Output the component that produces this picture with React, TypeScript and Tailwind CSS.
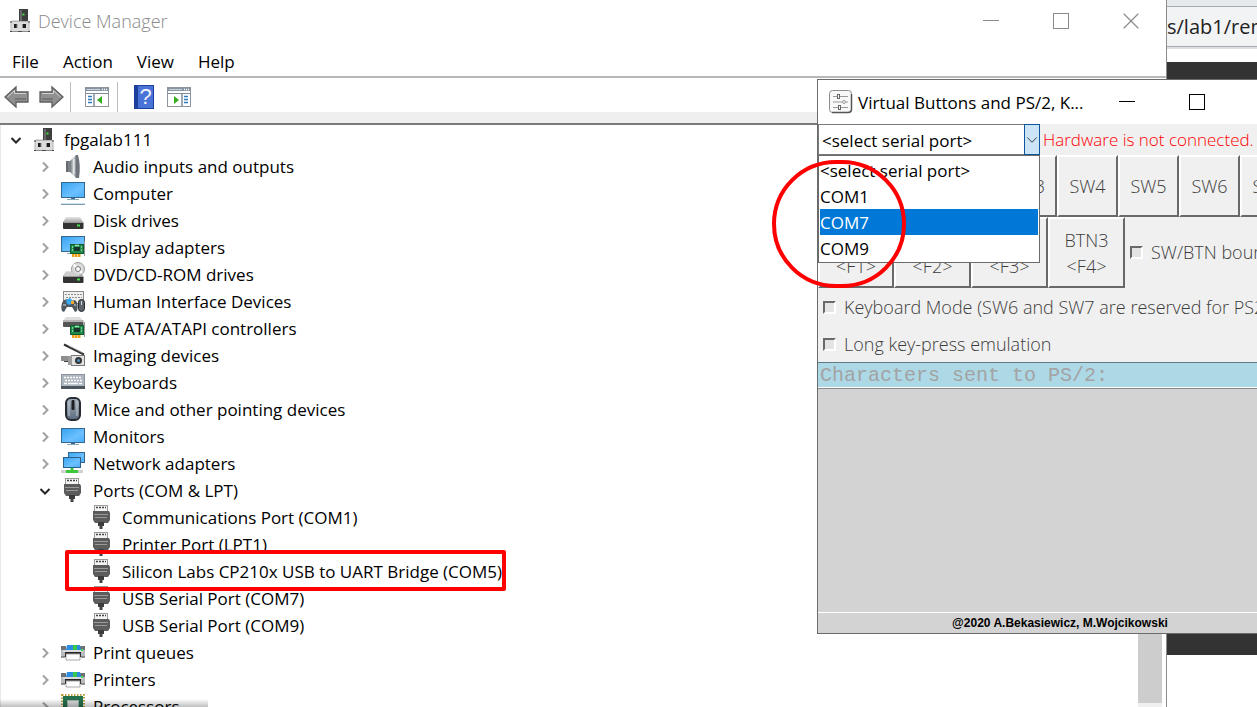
import type { ReactNode } from "react";
import { X, ChevronDown } from "lucide-react";

const Computer = () => (
  <svg viewBox="0 0 20 24" className="h-6 w-5">
    <rect x="9" y="0" width="9" height="12" fill="#3f3f3f" />
    <rect x="10" y="1" width="2" height="11" fill="#6a6a6a" />
    <rect x="12.5" y="4.5" width="2" height="2" fill="#3fe04a" />
    <path d="M2 11h7v1h9v1H1z" fill="#dcdcdc" />
    <rect x="1" y="12.5" width="18" height="10" fill="#dcdcdc" stroke="#b4b4b4" />
    <path d="M1 22.5h18" stroke="#8c8c8c" />
    <rect x="4" y="15" width="3" height="4" fill="#1c1c1c" />
    <rect x="13" y="15" width="3" height="4" fill="#1c1c1c" />
    <path d="M7 15v4M12.500 15v4" stroke="#8a8a8a" />
    <path d="M8 22.5h4M0 22.5h2M18 22.5h2M0 13h2M18 13h2" stroke="#4a4a4a" />
  </svg>
);

function Glyph({ children }: { children: ReactNode }) {
  return (
    <svg viewBox="0 0 24 25" className="h-[25px] w-6">
      <defs>
        <linearGradient id="screen" x1="0" y1="0" x2="1" y2="1">
          <stop offset="0" stopColor="#35a2f0" />
          <stop offset="0.6" stopColor="#6cc0ff" />
          <stop offset="1" stopColor="#48adf9" />
        </linearGradient>
        <linearGradient id="cone" x1="0" y1="0" x2="1" y2="0">
          <stop offset="0" stopColor="#6b7177" />
          <stop offset="0.6" stopColor="#d4d8dc" />
          <stop offset="1" stopColor="#7d848b" />
        </linearGradient>
        <linearGradient id="mouse" x1="0" y1="0" x2="0" y2="1">
          <stop offset="0" stopColor="#a5b1bd" />
          <stop offset="1" stopColor="#5b6b7c" />
        </linearGradient>
        <linearGradient id="case" x1="0" y1="0" x2="0" y2="1">
          <stop offset="0" stopColor="#e6e6e6" />
          <stop offset="1" stopColor="#a8a8a8" />
        </linearGradient>
      </defs>
      {children}
    </svg>
  );
}

const Card = () => (
  <g>
    <rect x="9.5" y="9.5" width="13" height="9" fill="#1f8a4a" stroke="#0f5c2e" />
    <rect x="13" y="12" width="6" height="4" fill="#17352a" />
    <path d="M11 12h1M11 15h1M20 12h1M20 15h1M14 10.500h4" stroke="#9be8b2" strokeWidth="1.5" />
    <path d="M23.500 6v15" stroke="#9a9a9a" />
    <path d="M11 20.5h9" stroke="#f0a01a" strokeWidth="3" strokeDasharray="2.500 0.500" />
  </g>
);

const Drive = () => (
  <g>
    <path d="M5 9h14l3 5H2z" fill="url(#case)" />
    <rect x="2" y="14" width="20.500" height="7" rx="1" fill="#333" />
    <path d="M2.500 14.500h19.500" stroke="#9b9b9b" />
    <rect x="16" y="16.500" width="3" height="2" fill="#46e04a" />
  </g>
);

const Audio = () => (
  <Glyph>
    <path d="M5 7h4v11H5z" fill="#7c8288" />
    <path d="M9 7l6-6v23l-6-6z" fill="url(#cone)" />
    <path d="M15 1h2q3 11 1 23h-3z" fill="#6d747b" />
    <path d="M6 7v11" stroke="#4e5459" />
    <path d="M13 5v15" stroke="#eef1f3" />
  </Glyph>
);

const Pc = () => (
  <Glyph>
    <rect x="0.5" y="1.5" width="23" height="15" fill="url(#screen)" stroke="#35688e" />
    <path d="M6 18.5h12" stroke="#8aa6b8" />
    <rect x="10" y="17" width="4" height="1" fill="#35688e" />
    <path d="M0 22.500h24" stroke="#cfe0ea" />
    <path d="M0 23.5h24" stroke="#7f9db0" />
  </Glyph>
);

const Disk = () => (
  <Glyph>
    <Drive />
  </Glyph>
);

const Display = () => (
  <Glyph>
    <rect x="0.5" y="1.5" width="23" height="15" fill="url(#screen)" stroke="#35688e" />
    <path d="M6 18.5h4" stroke="#8aa6b8" />
    <Card />
  </Glyph>
);

const Dvd = () => (
  <Glyph>
    <Drive />
    <circle cx="17" cy="7" r="6.500" fill="#dcdcdc" stroke="#9b9b9b" />
    <path d="M17 7L12.500 2.5M17 7l4 4" stroke="#fff" strokeWidth="2" />
    <circle cx="17" cy="7" r="2.5" fill="#fff" stroke="#777" />
    <path d="M4 12l2-2h6l7 4H2z" fill="#cfcfcf" />
  </Glyph>
);

const Hid = () => (
  <Glyph>
    <rect x="2.500" y="2.5" width="20" height="12" fill="#f0f0f0" stroke="#8a8a8a" />
    <path d="M4 5.5h17M5 8.5h16" stroke="#8e8e8e" strokeDasharray="2 1" />
    <path d="M1 22q-2-7 2-11l4-1 3 2 4-1q4 3 2 11l-2 1-3-5H6l-3 5z" fill="#505860" />
    <path d="M2 16h3M13 16h2" stroke="#a9b6c2" strokeWidth="1.500" />
    <path d="M5 11l4-2 3 3-3 4-3-1z" fill="#35a9f4" />
    <rect x="10" y="12" width="3" height="3" fill="#f5a623" />
    <rect x="17.500" y="10.5" width="6" height="12" rx="3" fill="#5d646c" stroke="#25282c" />
    <path d="M20.500 12v4" stroke="#d2d8de" />
  </Glyph>
);

const Ide = () => (
  <Glyph>
    <path d="M5 1h14l3 4H2z" fill="#dedede" />
    <rect x="2" y="4" width="20.500" height="3" fill="#b5b5b5" />
    <rect x="2" y="6" width="20.500" height="5" rx="1" fill="#555" />
    <Card />
  </Glyph>
);

const Imaging = () => (
  <Glyph>
    <path d="M3 1.500l20 10" stroke="#2d2d2d" strokeWidth="2" />
    <path d="M8 3l14 7" stroke="#a5a5a5" strokeWidth="0.7" />
    <rect x="0" y="13" width="7" height="5" fill="#8e8e8e" />
    <path d="M7 15h3M3 18.500h6" stroke="#444" />
    <rect x="10.500" y="12.500" width="13" height="10" fill="#e2e2e2" stroke="#777" />
    <rect x="7" y="13" width="4" height="9" fill="#9c9c9c" />
    <circle cx="17.500" cy="17.500" r="3.500" fill="#333" />
    <circle cx="17.500" cy="17.500" r="1.500" fill="#4d94c9" />
  </Glyph>
);

const Keyboard = () => (
  <Glyph>
    <rect x="0.500" y="4.500" width="23" height="12" fill="#aeb6bf" stroke="#8b949d" />
    <rect x="0" y="16" width="24" height="3" fill="#4d555e" />
    <path d="M3 7.500h18M4 10.500h17" stroke="#fff" strokeWidth="1.500" strokeDasharray="2 1" />
    <path d="M3 13.500h3M7 13.500h10M18 13.500h3" stroke="#fff" strokeWidth="1.500" />
  </Glyph>
);

const Mouse = () => (
  <Glyph>
    <rect x="5" y="1" width="14" height="22" rx="5" fill="url(#mouse)" stroke="#262b31" strokeWidth="2" />
    <path d="M8 4v15M16 4v15" stroke="#d0d8e0" strokeWidth="0.800" />
    <rect x="10.500" y="3" width="3" height="10" rx="1" fill="#1d2126" />
  </Glyph>
);

const Monitor = () => (
  <Glyph>
    <rect x="0.5" y="4.500" width="23" height="14" fill="url(#screen)" stroke="#35688e" />
    <rect x="10" y="19" width="4" height="1" fill="#35688e" />
    <path d="M6 20.500h12" stroke="#8aa6b8" />
  </Glyph>
);

const Network = () => (
  <Glyph>
    <rect x="7.500" y="1.500" width="16" height="10" fill="url(#screen)" stroke="#35688e" />
    <rect x="2.500" y="6.500" width="17" height="10" fill="url(#screen)" stroke="#2b5f88" />
    <path d="M0 20.500h22" stroke="#d0d0d0" strokeWidth="3" />
    <path d="M5 20.500h12M11 17v5" stroke="#3cc63c" strokeWidth="3" />
  </Glyph>
);

const Port = () => (
  <Glyph>
    <rect x="4.500" y="0.500" width="13" height="6" fill="#f4f4f4" stroke="#9b9b9b" />
    <path d="M6 2.500h10" stroke="#444" strokeWidth="1.500" strokeDasharray="2 1" />
    <path d="M3 6h16l1 2v7l-2 3H5l-2-3V7z" fill="#5c5c5c" />
    <path d="M4 9.500h14M5 12.500h12" stroke="#9a9a9a" />
    <rect x="8" y="17" width="6" height="4" fill="#3b3b3b" />
    <rect x="9.500" y="20" width="3" height="4" fill="#444" />
  </Glyph>
);

const Printer = () => (
  <Glyph>
    <path d="M0 6h4v3h16V6h4v11H0z" fill="#b9bcbf" />
    <path d="M0 6h5v4H0zM19 6h5v4h-5z" fill="#6e7276" />
    <path d="M6 5h13l1 5H5z" fill="#2b8de0" />
    <path d="M12 5h4v5h-4z" fill="#36c94b" />
    <path d="M2 10h20v2H2z" fill="#d9dbdd" />
    <rect x="4" y="12" width="16" height="2" fill="#222" />
    <rect x="20" y="9" width="2" height="2" fill="#42e04c" />
    <path d="M5 14h14v6H5z" fill="#fdfdfd" stroke="#a9a9a9" />
    <path d="M4.500 13v4M19.500 13v4" stroke="#333" />
    <path d="M0 17h4M20 17h4" stroke="#777" strokeWidth="1.500" />
  </Glyph>
);

const Processor = () => (
  <Glyph>
    <rect x="1" y="1" width="22" height="22" fill="none" stroke="#c0a040" strokeWidth="2" strokeDasharray="1.500 1.500" />
    <rect x="2" y="2" width="20" height="20" fill="#23704d" />
    <rect x="6.500" y="6.500" width="11" height="11" fill="#d9dcdc" stroke="#9fb0a8" />
  </Glyph>
);

type Node = { label: string; icon: () => ReactNode; level: number; open?: boolean; marked?: boolean };

const nodes: Node[] = [
  { label: "fpgalab111", icon: Computer, level: 0, open: true },
  { label: "Audio inputs and outputs", icon: Audio, level: 1 },
  { label: "Computer", icon: Pc, level: 1 },
  { label: "Disk drives", icon: Disk, level: 1 },
  { label: "Display adapters", icon: Display, level: 1 },
  { label: "DVD/CD-ROM drives", icon: Dvd, level: 1 },
  { label: "Human Interface Devices", icon: Hid, level: 1 },
  { label: "IDE ATA/ATAPI controllers", icon: Ide, level: 1 },
  { label: "Imaging devices", icon: Imaging, level: 1 },
  { label: "Keyboards", icon: Keyboard, level: 1 },
  { label: "Mice and other pointing devices", icon: Mouse, level: 1 },
  { label: "Monitors", icon: Monitor, level: 1 },
  { label: "Network adapters", icon: Network, level: 1 },
  { label: "Ports (COM & LPT)", icon: Port, level: 1, open: true },
  { label: "Communications Port (COM1)", icon: Port, level: 2 },
  { label: "Printer Port (LPT1)", icon: Port, level: 2 },
  { label: "Silicon Labs CP210x USB to UART Bridge (COM5)", icon: Port, level: 2, marked: true },
  { label: "USB Serial Port (COM7)", icon: Port, level: 2 },
  { label: "USB Serial Port (COM9)", icon: Port, level: 2 },
  { label: "Print queues", icon: Printer, level: 1 },
  { label: "Printers", icon: Printer, level: 1 },
  { label: "Processors", icon: Processor, level: 1 },
];

const indent = ["pl-[3px]", "pl-8", "pl-[61px]"];

function TreeRow({ node }: { node: Node }) {
  const Icon = node.icon;
  return (
    <li className={`relative flex h-[27px] items-center ${indent[node.level]}`}>
      <span className="flex w-[26px] shrink-0 justify-center">
        {node.level < 2 && (
          <button aria-label={`Toggle ${node.label}`}>
            <svg viewBox="0 0 12 12" className="size-3" fill="none" strokeWidth="2">
              {node.open ? (
                <path d="M1.500 4l4.500 4.500L10.500 4" stroke="#262626" />
              ) : (
                <path d="M4 1.500L8.500 6 4 10.500" stroke="#a0a0a0" />
              )}
            </svg>
          </button>
        )}
      </span>
      <span className="ml-[3px] flex w-6 shrink-0 justify-center">
        <Icon />
      </span>
      <span className="ml-2 whitespace-nowrap">{node.label}</span>
      {node.marked && (
        <span className="absolute -top-2 left-[65px] z-10 h-[41px] w-[441px] rounded-xs border-4 border-[#ff0000]" />
      )}
    </li>
  );
}

function Arrow({ flip }: { flip?: boolean }) {
  return (
    <svg viewBox="0 0 26 24" className={flip ? "h-6 w-[26px] -scale-x-100" : "h-6 w-[26px]"}>
      <path d="M1 12L12 2V7h12v10H12v5z" fill="#909090" stroke="#5e5e5e" strokeWidth="1.300" />
      <path d="M3.500 12L10.500 5.500V8.500H22" fill="none" stroke="#d2d2d2" />
      <path d="M11 14h11" stroke="#757575" strokeWidth="2" />
    </svg>
  );
}

function Pane({ flip }: { flip?: boolean }) {
  return (
    <svg viewBox="0 0 24 20" className="h-5 w-6">
      <rect x="0.500" y="0.500" width="23" height="19" fill="#fff" stroke="#8d949b" />
      <rect x="1" y="1" width="22" height="3" fill="#8795a3" />
      <path d="M2 2.500h13" stroke="#c9d2da" />
      <path d="M17 2.500h5" stroke="#fff" strokeWidth="1.500" strokeDasharray="1 1" />
      <path d="M1 6.500h22" stroke="#7c8c9b" />
      <g transform={flip ? "translate(24 0) scale(-1 1)" : undefined}>
        <path d="M3 9.500h4M3 12.500h4M3 15.500h4" stroke="#2c7cc0" strokeWidth="1.500" />
        <path d="M9 7v12" stroke="#7c8c9b" strokeWidth="1.500" />
        <path d="M17 9v8l-5-4z" fill="#36ad1f" />
      </g>
    </svg>
  );
}

function WindowControls() {
  return (
    <div className="flex items-center">
      <button aria-label="Minimize" className="flex w-[70px] justify-center">
        <svg viewBox="0 0 16 16" className="size-4" fill="none" stroke="currentColor">
          <path d="M0 7.500h16" />
        </svg>
      </button>
      <button aria-label="Maximize" className="flex w-[70px] justify-center">
        <svg viewBox="0 0 16 16" className="size-4" fill="none" stroke="currentColor">
          <rect x="0.500" y="0.500" width="15" height="15" />
        </svg>
      </button>
      <button aria-label="Close" className="flex w-[70px] justify-center">
        <X size={28} strokeWidth={1} />
      </button>
    </div>
  );
}

function DeviceManager() {
  return (
    <section className="flex min-w-0 flex-1 flex-col overflow-hidden border-r border-[#8c8c8c] bg-white text-black">
      <header className="flex h-[41px] shrink-0 items-center justify-between pl-[10px] text-[#8a8a8a]">
        <div className="flex items-center gap-2">
          <Computer />
          <h1 className="pt-px text-[18px] font-light">Device Manager</h1>
        </div>
        <WindowControls />
      </header>
      <nav className="flex h-[37px] shrink-0 items-center gap-6 border-b-2 border-[#b8b8b8] pl-3 pt-[6px]">
        <button>File</button>
        <button>Action</button>
        <button>View</button>
        <button>Help</button>
      </nav>
      <div className="flex h-[34px] shrink-0 items-center pl-1 pt-1">
        <button aria-label="Back">
          <Arrow />
        </button>
        <button aria-label="Forward" className="ml-2">
          <Arrow flip />
        </button>
        <span className="ml-[6px] h-[30px] w-px bg-[#bdbdbd]" />
        <button aria-label="Show console tree" className="ml-[14px]">
          <Pane />
        </button>
        <span className="ml-2 h-[30px] w-px bg-[#bdbdbd]" />
        <button
          aria-label="Help topics"
          className="ml-4 flex h-6 w-5 items-center justify-center border border-l-4 border-[#1c3f9c] bg-[#4a73d8] font-['Liberation_Sans',sans-serif] text-[22px] leading-none text-[#eef2fb]"
        >
          ?
        </button>
        <button aria-label="Show action pane" className="ml-[13px]">
          <Pane flip />
        </button>
      </div>
      <div className="h-[13px] shrink-0 border-b-2 border-[#7a7a7a] bg-[#efefef]" />
      <div className="flex min-h-0 flex-1 justify-between overflow-hidden border-l border-[#e8e8e8]">
        <ul className="-ml-px pt-px">
          {nodes.map((node) => (
            <TreeRow key={node.label} node={node} />
          ))}
        </ul>
        <div className="mr-1 w-6 bg-[#f0f0f0] pb-1">
          <div className="h-full bg-[#cdcdcd]" />
        </div>
      </div>
    </section>
  );
}

function Browser() {
  return (
    <section className="flex w-[90px] shrink-0 flex-col overflow-hidden bg-white">
      <div className="h-[7px] shrink-0 border-b border-[#a6abb0] bg-[#e6eaed]" />
      <div className="flex h-10 shrink-0 items-center border-b border-[#a6abb0] bg-[#f2f3f4] pt-px text-[20px] text-[#222]">
        s/lab1/remote
      </div>
      <div className="h-[15px] shrink-0 border-t-2 border-[#dcdfe3]" />
      <div className="h-[593px] shrink-0 bg-[#333]" />
    </section>
  );
}

const raised = "border-2 border-t-white border-l-white border-r-[#696969] border-b-[#696969] bg-[#f0f0f0]";

const ports = ["<select serial port>", "COM1", "COM7", "COM9"];

function Check({ label }: { label: string }) {
  return (
    <label className="flex items-center gap-2 whitespace-nowrap">
      <input
        type="checkbox"
        className="size-[13px] appearance-none border-2 border-b-white border-l-[#696969] border-r-white border-t-[#696969] bg-[#e4e4e4]"
      />
      {label}
    </label>
  );
}

function VirtualButtons() {
  return (
    <section className="absolute -right-[46px] top-[79px] flex h-[555px] w-[486px] flex-col border border-[#6b6b6b] bg-[#f0f0f0] text-[18px] font-light text-[#3c3c3c]">
      <header className="flex h-11 shrink-0 items-center bg-white pl-[11px] text-black">
        <svg viewBox="0 0 24 24" className="size-6" fill="none" stroke="#9a9a9a">
          <rect x="0.500" y="0.500" width="22" height="22" rx="3" fill="#f8f8f8" stroke="#8d8d8d" />
          <path d="M3 22.500h16q3.500 0 3.500-3.500V4" stroke="#555" strokeWidth="1.500" />
          <path d="M4 6.500h4M11 6.500h8M4 12h9M17 12h2M4 17.500h5M12 17.500h7" />
          <rect x="8.500" y="4.500" width="2" height="4" stroke="#666" />
          <circle cx="15" cy="12" r="1.500" />
          <rect x="9.500" y="15.500" width="2" height="4" stroke="#666" />
        </svg>
        <h2 className="ml-[5px] flex-1 whitespace-nowrap pt-px text-[17px] font-normal">
          Virtual Buttons and PS/2, K...
        </h2>
        <WindowControls />
      </header>
      <div className="relative flex h-[31px] shrink-0 items-center text-[17px] font-normal">
        <div className="relative h-full w-[222px]">
          <select
            aria-label="Serial port"
            className="h-full w-full appearance-none border border-[#7a7a7a] bg-white pl-[3px] pt-[2px] text-black"
          >
            {ports.map((port) => (
              <option key={port}>{port}</option>
            ))}
          </select>
          <span className="pointer-events-none absolute inset-y-0 right-0 flex w-4 items-center justify-center border border-[#0f559c] bg-[#cce4f7] text-black">
            <ChevronDown size={18} strokeWidth={1} className="shrink-0" />
          </span>
        </div>
        <p className="ml-[3px] whitespace-nowrap pt-px font-light text-[#ff0000]">Hardware is not connected.</p>
        <ul
          role="listbox"
          aria-label="Serial ports"
          className="absolute left-0 top-full z-10 w-[222px] border border-[#6b6b6b] bg-white p-px text-black"
        >
          {ports.map((port) => (
            <li
              key={port}
              role="option"
              aria-selected={port === "COM7"}
              className="h-[26px] pt-px leading-[26px] aria-selected:bg-[#0078d7] aria-selected:text-white"
            >
              {port}
            </li>
          ))}
        </ul>
      </div>
      <div className="flex h-[62px] shrink-0">
        <button className={`w-[59px] ${raised}`}>SW0</button>
        {["SW1", "SW2", "SW3"].map((name) => (
          <button key={name} className={`w-[60px] ${raised}`}>
            {name}
          </button>
        ))}
        {["SW4", "SW5", "SW6", "SW7"].map((name) => (
          <button key={name} className={`w-[61px] ${raised}`}>
            {name}
          </button>
        ))}
      </div>
      <div className="flex h-[71px] shrink-0 items-center">
        <button className={`h-full w-[76px] leading-[26px] ${raised}`}>
          BTN0
          <br />
          {"<F1>"}
        </button>
        {[1, 2, 3].map((n) => (
          <button key={n} className={`h-full w-[77px] leading-[26px] ${raised}`}>
            BTN{n}
            <br />
            {`<F${n + 1}>`}
          </button>
        ))}
        <div className="ml-[5px]">
          <Check label="SW/BTN bounce" />
        </div>
      </div>
      <div className="flex shrink-0 flex-col gap-3 px-[5px] pb-[5px] pt-[7px] leading-[25px]">
        <Check label="Keyboard Mode (SW6 and SW7 are reserved for PS2)" />
        <Check label="Long key-press emulation" />
      </div>
      <p className="h-[26px] shrink-0 border-y border-b-white border-t-[#5f7b84] bg-[#add8e6] pl-[2px] font-['Liberation_Mono',monospace] text-[20px] leading-[26px] text-[#a3a3a3]">
        Characters sent to PS/2:
      </p>
      <textarea
        aria-label="Characters sent to PS/2"
        className="min-h-0 flex-1 resize-none border-b border-t border-b-white border-t-[#8a8a8a] bg-[#d3d3d3]"
      />
      <footer className="h-5 shrink-0 bg-[#d3d3d3] text-center font-['Liberation_Sans',sans-serif] text-[12px] font-bold leading-5 text-black">
        @2020 A.Bekasiewicz, M.Wojcikowski
      </footer>
      <span className="pointer-events-none absolute -left-[46px] top-20 z-20 h-32 w-[134px] rounded-full border-4 border-[#ff0000]" />
    </section>
  );
}

export default function App() {
  return (
    <main className="relative flex h-screen overflow-hidden bg-white font-['Open_Sans',sans-serif] text-[17px]">
      <DeviceManager />
      <Browser />
      <VirtualButtons />
      <div className="pointer-events-none absolute bottom-0 left-0 h-2 w-52 bg-linear-to-t from-black/25 to-transparent" />
    </main>
  );
}
